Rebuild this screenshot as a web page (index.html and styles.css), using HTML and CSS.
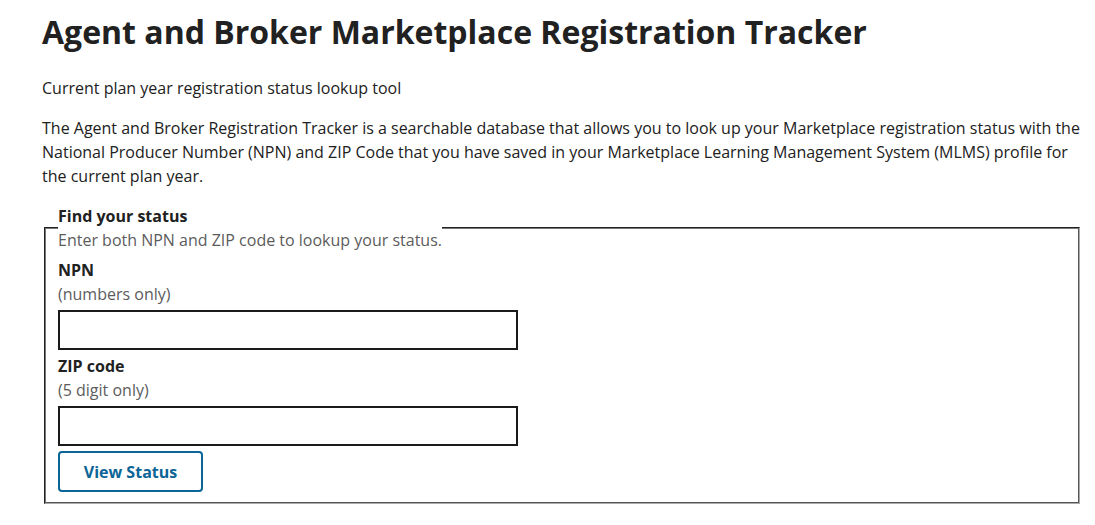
FILE: index.html
```html
<!DOCTYPE html>
<html lang="en">
<head>
    <meta charset="UTF-8">
    <meta name="viewport" content="width=device-width, initial-scale=1.0">
    <title>Agent and Broker Marketplace Registration Tracker</title>
    <link rel="stylesheet" href="styles.css">
</head>
<body>
    <div class="container">
        <h1>Agent and Broker Marketplace Registration Tracker</h1>
        <p class="lead">Current plan year registration status lookup tool</p>
        <p>The Agent and Broker Registration Tracker is a searchable database that allows you to look up your Marketplace registration status with the National Producer Number (NPN) and ZIP Code that you have saved in your Marketplace Learning Management System (MLMS) profile for the current plan year.</p>

        <form class="lookup-form" onsubmit="return false;">
            <fieldset class="status-fieldset">
                <legend>
                    <span class="legend-title">Find your status</span>
                    <span class="legend-hint">Enter both NPN and ZIP code to lookup your status.</span>
                </legend>

                <label class="field-label" for="npn">NPN</label>
                <span class="field-hint">(numbers only)</span>
                <input class="text-input" type="text" id="npn" name="npn">

                <label class="field-label" for="zip">ZIP code</label>
                <span class="field-hint">(5 digit only)</span>
                <input class="text-input" type="text" id="zip" name="zip">

                <button class="btn-outline" type="submit">View Status</button>
            </fieldset>
        </form>
    </div>
</body>
</html>
```

FILE: styles.css
```css
/* Base page */
body {
    font-family: "Open Sans", Arial, sans-serif;
    margin: 0;
    padding: 0;
    background: #fff;
    color: #212121;
}

.container {
    padding: 12px 15px 0 42px;
}

/* Header */
h1 {
    font-size: 32px;
    font-weight: 700;
    line-height: 40px;
    margin: 0 0 24px 0;
}

p {
    font-size: 16px;
    line-height: 24px;
    margin: 0 0 16px 0;
}

/* Lookup form */
.lookup-form {
    margin: 0;
}

.status-fieldset {
    width: 1008px;
    margin: 0 0 0 2px;
    padding: 0 12px 10px 12px;
    border: 2px groove #c0c0c0;
    border-color: #777 #aaa #aaa #777;
}

.status-fieldset legend {
    padding: 0;
}

.legend-title {
    display: block;
    font-size: 16px;
    font-weight: 700;
    line-height: 24px;
}

.legend-hint {
    display: block;
    font-size: 16px;
    line-height: 24px;
    color: #5c5c5c;
}

.field-label {
    display: block;
    font-size: 16px;
    font-weight: 700;
    line-height: 24px;
    margin-top: 4px;
}

.status-fieldset legend + .field-label {
    margin-top: 6px;
}

.field-hint {
    display: block;
    font-size: 16px;
    line-height: 24px;
    color: #5c5c5c;
}

.text-input {
    display: block;
    box-sizing: border-box;
    width: 460px;
    height: 40px;
    margin-top: 4px;
    border: 2px solid #1b1b1b;
    border-radius: 0;
    font-family: inherit;
    font-size: 16px;
    padding: 0 8px;
}

/* Outline button */
.btn-outline {
    display: block;
    box-sizing: border-box;
    margin-top: 5px;
    width: 145px;
    height: 41px;
    background: #fff;
    border: 2px solid #0b6596;
    border-radius: 4px;
    color: #0b6596;
    font-family: inherit;
    font-size: 16px;
    font-weight: 700;
    cursor: pointer;
}

.btn-outline:hover {
    background: #f0f6fa;
}
```
